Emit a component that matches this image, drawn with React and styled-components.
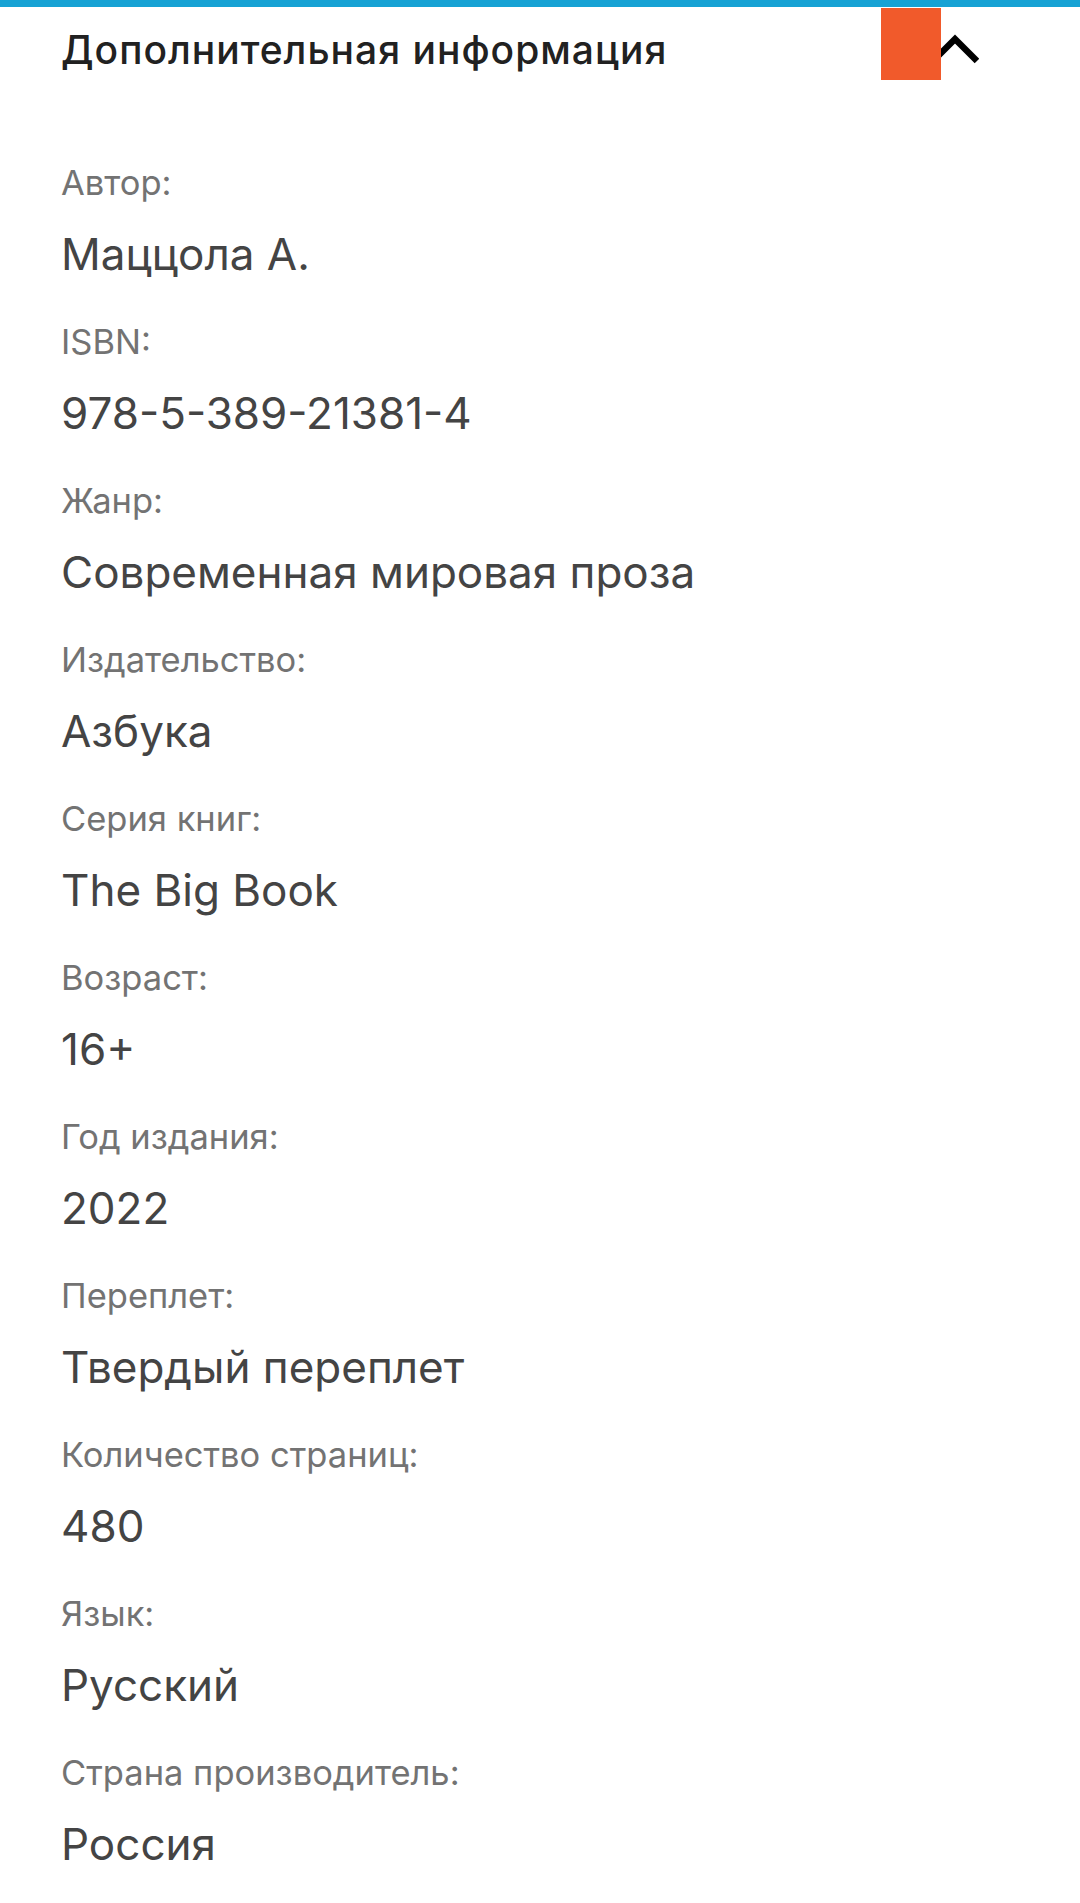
import React from "react";
import styled, { createGlobalStyle } from "styled-components";

const Global = createGlobalStyle`
  html, body { margin: 0; padding: 0; background: #ffffff; }
  body { font-family: Inter, "Noto Sans", sans-serif; }
  * { box-sizing: border-box; }
`;

const Page = styled.div`
  width: 1080px;
  min-height: 1903px;
  background: #ffffff;
  border-top: 7px solid #17a2d4;
`;

const Header = styled.div`
  position: relative;
  display: flex;
  align-items: center;
  justify-content: space-between;
  padding: 19px 101px 0 61px;
`;

const Title = styled.h2`
  margin: 0;
  font-family: Inter, "Noto Sans", sans-serif;
  font-size: 39px;
  letter-spacing: 1px;
  line-height: 46px;
  font-weight: 500;
  color: #212121;
`;

const Toggle = styled.button`
  width: 48px;
  height: 48px;
  padding: 0;
  border: 0;
  background: transparent;
  display: flex;
  align-items: center;
  justify-content: center;
`;

const Marker = styled.div`
  position: absolute;
  left: 881px;
  top: 1px;
  width: 60px;
  height: 72px;
  background: #f15a2b;
`;

const List = styled.dl`
  margin: 0;
  padding: 89px 61px 0 61px;
  display: flex;
  flex-direction: column;
`;

const Item = styled.div`
  display: flex;
  flex-direction: column;
  padding-bottom: 40px;
`;

const Label = styled.dt`
  margin: 0;
  font-size: 34.5px;
  line-height: 40px;
  color: #737373;
  font-weight: 400;
`;

const Value = styled.dd`
  margin: 23px 0 0 0;
  font-size: 44px;
  line-height: 56px;
  color: #444444;
  font-weight: 400;
`;

const rows = [
  ["Автор:", "Маццола А."],
  ["ISBN:", "978-5-389-21381-4"],
  ["Жанр:", "Современная мировая проза"],
  ["Издательство:", "Азбука"],
  ["Серия книг:", "The Big Book"],
  ["Возраст:", "16+"],
  ["Год издания:", "2022"],
  ["Переплет:", "Твердый переплет"],
  ["Количество страниц:", "480"],
  ["Язык:", "Русский"],
  ["Страна производитель:", "Россия"],
];

export default function App() {
  return (
    <Page>
      <Global />
      <Header>
        <Title>Дополнительная информация</Title>
        <Toggle aria-label="Свернуть">
          <svg width="48" height="48" viewBox="0 0 48 48">
            <path d="M2 35 L24 13 L46 35" fill="none" stroke="#000" strokeWidth="6.5" />
          </svg>
        </Toggle>
        <Marker />
      </Header>
      <List>
        {rows.map(([l, v]) => (
          <Item key={l}>
            <Label>{l}</Label>
            <Value>{v}</Value>
          </Item>
        ))}
      </List>
    </Page>
  );
}
